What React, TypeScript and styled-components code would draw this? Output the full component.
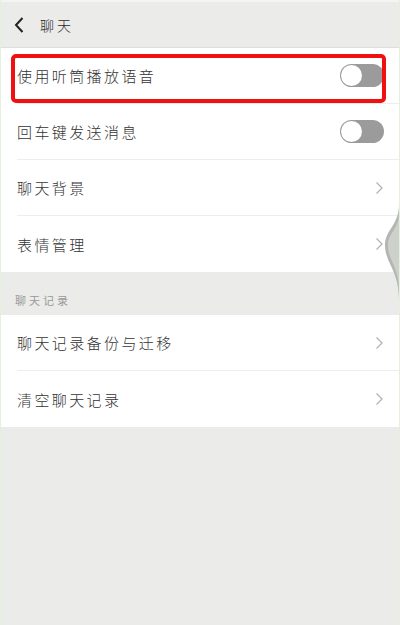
import styled, { createGlobalStyle } from 'styled-components'

const GlobalStyle = createGlobalStyle`
  html, body {
    margin: 0;
    padding: 0;
    background: #ebebea;
  }
  body {
    font-family: "Noto Sans CJK SC", "Noto Sans", sans-serif;
  }
`

const Screen = styled.div`
  position: relative;
  width: 400px;
  height: 625px;
  overflow: hidden;
  background: #ebebea;
  border-left: 1px solid #e3f0dc;
  border-right: 1px solid #e3f0dc;
  box-sizing: border-box;
`

const Header = styled.div`
  display: flex;
  align-items: center;
  height: 48px;
  padding: 0 0 0 12px;
  background: #ebebea;
  border-top: 2px solid #f4f4f3;
  border-bottom: 1px solid #dedede;
  box-sizing: border-box;
`

const BackButton = styled.div`
  display: flex;
  align-items: center;
  width: 27px;
`

const Title = styled.span`
  font-size: 14px;
  font-weight: 300;
  letter-spacing: 3px;
  color: #2a2a2a;
`

const Group = styled.div`
  background: #fff;
`

const Row = styled.div<{ last?: boolean }>`
  position: relative;
  display: flex;
  align-items: center;
  justify-content: space-between;
  height: 56px;
  margin-left: 16px;
  padding-right: 15px;
  border-bottom: ${(p) => (p.last ? 'none' : '1px solid #ededed')};
  box-sizing: border-box;
`

const Label = styled.span`
  font-size: 15px;
  font-weight: 300;
  letter-spacing: 2.4px;
  color: #333;
`

const Toggle = styled.div`
  position: relative;
  width: 44px;
  height: 23px;
  border-radius: 12px;
  background: #9b9b9b;
  &::after {
    content: '';
    position: absolute;
    left: 1px;
    top: 1px;
    width: 21px;
    height: 21px;
    border-radius: 50%;
    background: #fff;
  }
`

const Highlight = styled.div`
  position: absolute;
  left: -6px;
  right: 13px;
  top: 6px;
  bottom: 0;
  border: 4px solid #f01010;
  border-radius: 5px;
  pointer-events: none;
`

const SectionLabel = styled.div`
  height: 43px;
  padding: 20px 0 0 14px;
  box-sizing: border-box;
  font-size: 11px;
  letter-spacing: 3px;
  color: #9a9a9a;
`

const Spacer = styled.div`
  height: 44px;
`

const SideHandle = styled.svg`
  position: absolute;
  right: 0;
  top: 205px;
`

function Chevron() {
  return (
    <svg width="9" height="14" viewBox="0 0 9 14">
      <path d="M1.5 1.5 L7 7 L1.5 12.5" fill="none" stroke="#b3b3b3" strokeWidth="1.3" />
    </svg>
  )
}

export default function App() {
  return (
    <Screen>
      <GlobalStyle />
      <Header>
        <BackButton>
          <svg width="12" height="18" viewBox="0 0 12 18">
            <path d="M9.5 2 L3 9 L9.5 16" fill="none" stroke="#222" strokeWidth="2" />
          </svg>
        </BackButton>
        <Title>聊天</Title>
      </Header>
      <Group>
        <Row>
          <Label>使用听筒播放语音</Label>
          <Toggle />
          <Highlight />
        </Row>
        <Row>
          <Label>回车键发送消息</Label>
          <Toggle />
        </Row>
        <Row>
          <Label>聊天背景</Label>
          <Chevron />
        </Row>
        <Row last>
          <Label>表情管理</Label>
          <Chevron />
        </Row>
      </Group>
      <SectionLabel>聊天记录</SectionLabel>
      <Group>
        <Row>
          <Label>聊天记录备份与迁移</Label>
          <Chevron />
        </Row>
        <Row last>
          <Label>清空聊天记录</Label>
          <Chevron />
        </Row>
      </Group>
      <Spacer />
      <SideHandle width="16" height="95" viewBox="0 0 16 95">
        <path d="M16 0 C16 20 2 25 2 40 C2 58 16 65 16 95 Z" fill="#b4b6b2" />
        <path d="M16 8 C16 24 5 28 5 40 C5 55 16 62 16 86 Z" fill="#cdd0cb" />
      </SideHandle>
    </Screen>
  )
}
